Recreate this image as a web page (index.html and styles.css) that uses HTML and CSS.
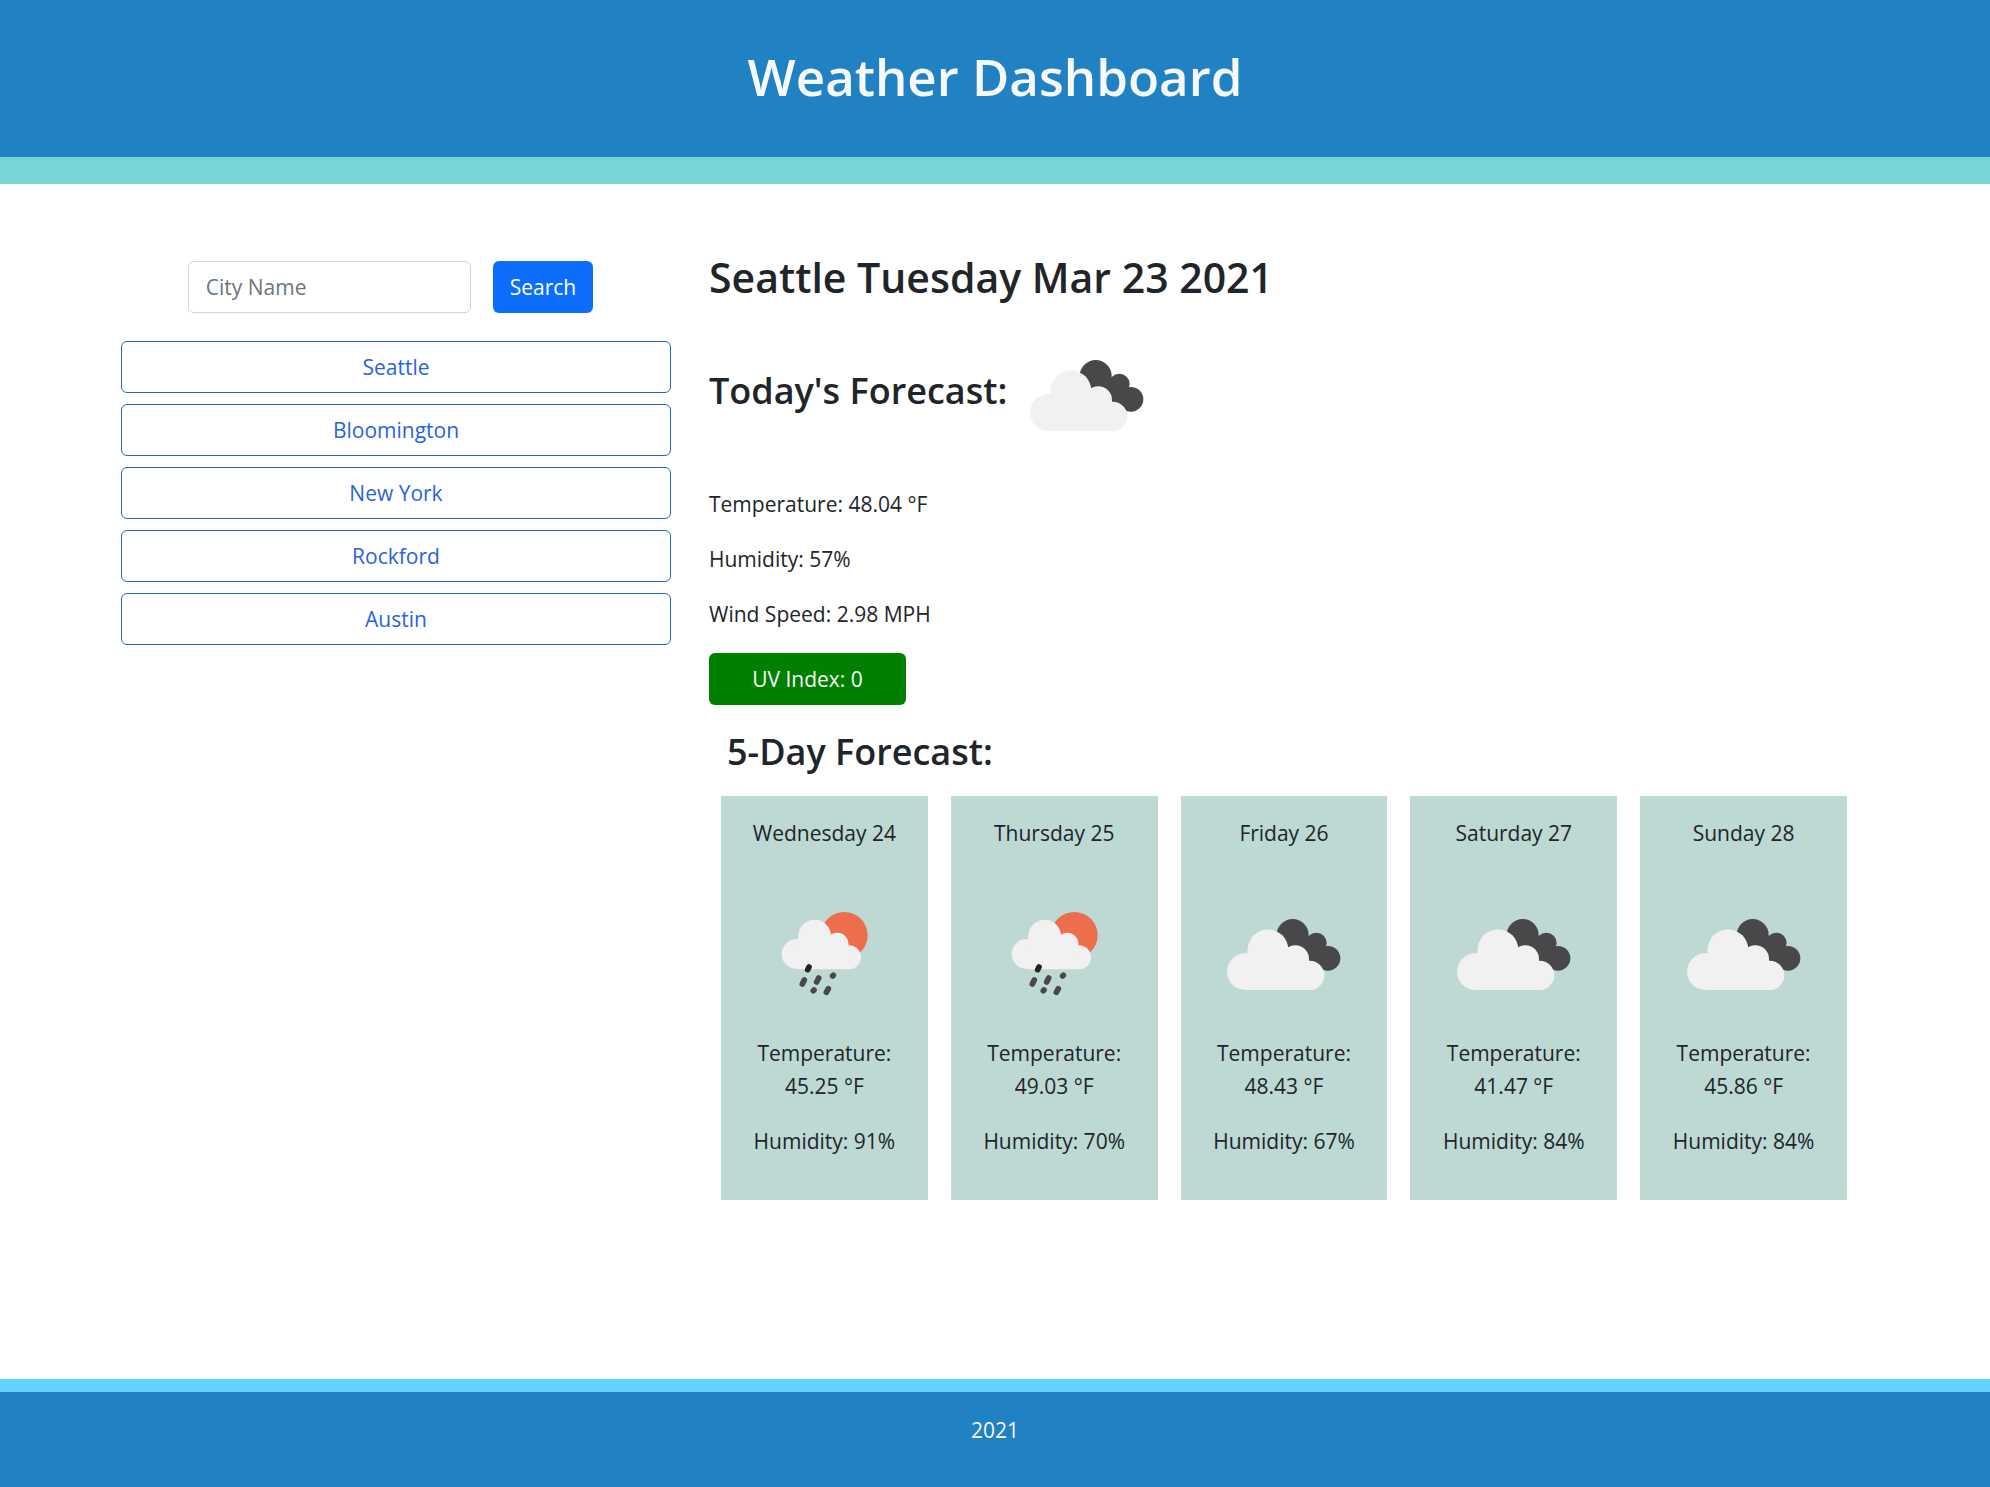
FILE: index.html
```html
<!DOCTYPE html>
<html lang="en">
<head>
<meta charset="utf-8">
<meta name="viewport" content="width=device-width, initial-scale=1">
<title>Weather Dashboard</title>
<link rel="stylesheet" href="styles.css">
</head>
<body>
<svg class="sprite" aria-hidden="true">
  <symbol id="clouds" viewBox="24 -39 411 411">
    <g fill="#48484a">
      <circle cx="257" cy="108" r="48"/>
      <circle cx="328" cy="132" r="31"/>
      <circle cx="363" cy="178" r="37"/>
      <path d="M212 125L257 85L303 112L340 145L362 214L300 200L240 150Z"/>
    </g>
    <g fill="#f1f1f1">
      <circle cx="183" cy="152" r="61"/>
      <circle cx="115" cy="218" r="55"/>
      <circle cx="265" cy="180" r="41"/>
      <circle cx="308" cy="229" r="44"/>
      <path d="M115 163H122V152H240L265 180H306V190L320 273H115Z"/>
    </g>
  </symbol>
  <symbol id="rain" viewBox="-12 -12 411 411">
    <circle cx="253" cy="136" r="70" fill="#ec6e4c"/>
    <g fill="#f1f1f1">
      <circle cx="164" cy="138" r="49"/>
      <circle cx="110" cy="192" r="45"/>
      <circle cx="232" cy="161" r="33"/>
      <circle cx="267" cy="202" r="36"/>
      <path d="M110 147H115V138H208L232 161H265V172L267 238H110Z"/>
    </g>
    <g stroke="#48484a" stroke-width="17" stroke-linecap="round">
      <path d="M143 239L147 231" stroke="#232325"/>
      <path d="M127 282L133 270M170 276L176 264M218 258L220 256M160 302L162 300M199 307L205 296"/>
    </g>
  </symbol>
</svg>

<header class="site-header">
  <h1>Weather Dashboard</h1>
</header>

<main class="dashboard">
  <aside class="sidebar">
    <form class="search">
      <input class="search-input" type="text" placeholder="City Name" aria-label="City Name">
      <button class="btn btn-primary" type="button">Search</button>
    </form>
    <div class="cities">
      <button class="btn btn-outline" type="button">Seattle</button>
      <button class="btn btn-outline" type="button">Bloomington</button>
      <button class="btn btn-outline" type="button">New York</button>
      <button class="btn btn-outline" type="button">Rockford</button>
      <button class="btn btn-outline" type="button">Austin</button>
    </div>
  </aside>

  <section class="forecast">
    <h2 class="city-date">Seattle Tuesday Mar 23 2021</h2>
    <div class="today">
      <h3>Today's Forecast:</h3>
      <svg class="icon" role="img" aria-label="Broken clouds"><use href="#clouds"/></svg>
    </div>
    <div class="stats">
      <p>Temperature: 48.04 °F</p>
      <p>Humidity: 57%</p>
      <p>Wind Speed: 2.98 MPH</p>
      <button class="btn btn-uv" type="button">UV Index: 0</button>
    </div>
    <div class="five-day">
      <h3>5-Day Forecast:</h3>
      <div class="cards">
        <article class="card">
          <p>Wednesday 24</p>
          <svg class="icon" role="img" aria-label="Rain"><use href="#rain"/></svg>
          <p>Temperature: 45.25&nbsp;°F</p>
          <p>Humidity: 91%</p>
        </article>
        <article class="card">
          <p>Thursday 25</p>
          <svg class="icon" role="img" aria-label="Rain"><use href="#rain"/></svg>
          <p>Temperature: 49.03&nbsp;°F</p>
          <p>Humidity: 70%</p>
        </article>
        <article class="card">
          <p>Friday 26</p>
          <svg class="icon" role="img" aria-label="Broken clouds"><use href="#clouds"/></svg>
          <p>Temperature: 48.43&nbsp;°F</p>
          <p>Humidity: 67%</p>
        </article>
        <article class="card">
          <p>Saturday 27</p>
          <svg class="icon" role="img" aria-label="Broken clouds"><use href="#clouds"/></svg>
          <p>Temperature: 41.47&nbsp;°F</p>
          <p>Humidity: 84%</p>
        </article>
        <article class="card">
          <p>Sunday 28</p>
          <svg class="icon" role="img" aria-label="Broken clouds"><use href="#clouds"/></svg>
          <p>Temperature: 45.86&nbsp;°F</p>
          <p>Humidity: 84%</p>
        </article>
      </div>
    </div>
  </section>
</main>

<footer class="site-footer">2021</footer>
</body>
</html>
```
FILE: styles.css
```css
* {
  box-sizing: border-box;
}

body {
  margin: 0;
  min-height: 100vh;
  display: flex;
  flex-direction: column;
  background: #fff;
  color: #212529;
  font-family: "Open Sans", "Noto Sans", sans-serif;
  font-size: 21px;
  line-height: 33px;
}

h1, h2, h3, p {
  margin: 0;
}

h1, h2, h3 {
  font-weight: 600;
}

h3 {
  font-size: 36px;
  line-height: 46px;
}

.sprite {
  position: absolute;
  width: 0;
  height: 0;
}

.icon {
  display: block;
  width: 137px;
  height: 137px;
  flex: none;
}

.site-header {
  padding: 43px 22px 48px;
  border-bottom: 27px solid #78d5d7;
  background: #2081c3;
  color: #f7f9f9;
  text-align: center;
}

.site-header h1 {
  font-size: 51px;
  line-height: 66px;
}

.dashboard {
  flex: 1;
  display: grid;
  grid-template-columns: 550fr 1160fr;
  align-items: start;
  gap: 38px;
  padding: 67px 121px 66px;
}

.sidebar {
  padding-top: 10px;
}

.search {
  display: flex;
  justify-content: center;
  gap: 22px;
  margin: 0 11px 28px 0;
}

.search-input {
  width: 283px;
  min-width: 0;
  height: 52px;
  padding: 0 17px;
  border: 1px solid #ced4da;
  border-radius: 6px;
  background: #fff;
  color: #212529;
  font: inherit;
}

.search-input::placeholder {
  color: #6c757d;
  opacity: 1;
}

.btn {
  height: 52px;
  padding: 0 16px;
  border: 1px solid transparent;
  border-radius: 6px;
  font: inherit;
  text-align: center;
  cursor: pointer;
}

.btn-primary {
  min-width: 100px;
  background: #0d6efd;
  color: #fff;
}

.btn-outline {
  border-color: #2667bf;
  background: #fff;
  color: #2864dc;
}

.btn-uv {
  width: 197px;
  background: #008000;
  color: #f7f9f9;
}

.cities {
  display: grid;
  gap: 11px;
}

.city-date {
  font-size: 41px;
  line-height: 53px;
}

.today {
  display: flex;
  align-items: center;
  gap: 11px;
  margin: 23px 0 24px;
}

.today h3 {
  padding-bottom: 10px;
}

.stats {
  display: flex;
  flex-direction: column;
  align-items: flex-start;
  gap: 22px;
}

.five-day {
  padding: 24px 22px 0 12px;
}

.five-day h3 {
  padding: 0 6px 21px;
}

.cards {
  display: grid;
  grid-template-columns: repeat(5, 1fr);
  gap: 23px;
}

.card {
  display: flex;
  flex-direction: column;
  align-items: center;
  padding: 21px 22px 20px;
  background: #bed8d4;
  text-align: center;
}

.card p {
  margin-bottom: 22px;
}

.card .icon {
  margin: 14px 0;
}

.site-footer {
  padding: 22px 22px 40px;
  border-top: 13px solid #63d2ff;
  background: #2081c3;
  color: #f7f9f9;
  text-align: center;
}
```
